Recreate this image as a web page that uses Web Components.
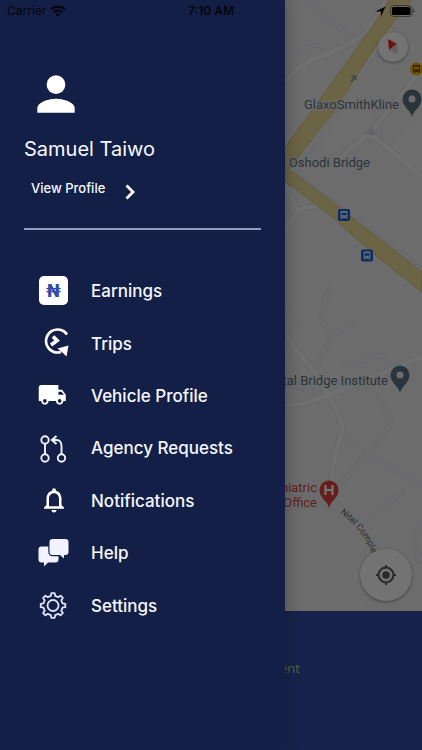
<!DOCTYPE html>
<html lang="en">
<head>
<meta charset="utf-8">
<meta name="viewport" content="width=device-width, initial-scale=1">
<title>Driver menu</title>
<style>
    html, body {
        margin: 0;
        height: 100%;
    }

    body {
        --drawer: #141f48;
        --panel: #324ca7;
        --label: #f6f8ff;
        font-family: Inter, "Liberation Sans", sans-serif;
        background: #17234d;
    }
</style>
</head>
<body>
<driver-app>
    <status-bar slot="status"></status-bar>
    <map-view slot="map"></map-view>
    <side-drawer slot="drawer" name="Samuel Taiwo">
        <menu-item icon="earnings" href="#earnings">Earnings</menu-item>
        <menu-item icon="trips" href="#trips">Trips</menu-item>
        <menu-item icon="vehicle" href="#vehicle">Vehicle Profile</menu-item>
        <menu-item icon="agency" href="#agency">Agency Requests</menu-item>
        <menu-item icon="bell" href="#notifications">Notifications</menu-item>
        <menu-item icon="help" href="#help">Help</menu-item>
        <menu-item icon="settings" href="#settings">Settings</menu-item>
    </side-drawer>
    <a slot="panel" href="#payment">ent</a>
</driver-app>

<script>
// Outline of a cog with rounded teeth
function gearPath(cx, cy, teeth, outer, inner) {
    const points = [];
    const step = (Math.PI * 2) / teeth;
    for (let i = 0; i < teeth; i++) {
        const mid = i * step - Math.PI / 2;
        [[-0.29, inner], [-0.17, outer], [0.17, outer], [0.29, inner]].forEach(([offset, r]) => {
            const angle = mid + offset * step;
            points.push((cx + Math.cos(angle) * r).toFixed(2) + ' ' + (cy + Math.sin(angle) * r).toFixed(2));
        });
    }
    return 'M' + points.join('L') + 'Z';
}

const ICONS = {
    earnings: `
        <rect x="2" y="1" width="29" height="29" rx="5" fill="#fff"/>
        <text x="16.5" y="22" text-anchor="middle" font-family="Roboto, sans-serif" font-size="18" font-weight="900" fill="#324ca7">₦</text>`,
    trips: `
        <path d="M30 6.5A11.5 11.5 0 1 0 24 24" fill="none" stroke="#fff" stroke-width="2.6"/>
        <path d="M20.5 20.5L31.5 17.5L29.5 28.5L26 25Z" fill="#fff"/>
        <path d="M16 8.5L20 12.5L14 17" fill="none" stroke="#fff" stroke-width="3.8"/>`,
    vehicle: `
        <g transform="translate(0.5 0) scale(1.23)"><path fill="#fff" d="M20 8h-3V4H3c-1.1 0-2 .9-2 2v11h2c0 1.66 1.34 3 3 3s3-1.34 3-3h6c0 1.66 1.34 3 3 3s3-1.34 3-3h2v-5l-3-4zM6 18.5c-.83 0-1.5-.67-1.5-1.5s.67-1.5 1.5-1.5 1.5.67 1.5 1.5-.67 1.5-1.5 1.5zm13.5-9l1.96 2.5H17V9.5h2.5zm-1.5 9c-.83 0-1.5-.67-1.5-1.5s.67-1.5 1.5-1.5 1.5.67 1.5 1.5-.67 1.5-1.5 1.5z"/></g>`,
    agency: `
        <g fill="none" stroke="#eef2ff" stroke-width="1.9">
            <circle cx="8" cy="8" r="3.7"/><circle cx="8" cy="26" r="3.7"/><circle cx="24.5" cy="26" r="3.7"/>
            <path d="M8 12v10M24.5 22v-8q0-6-5-6h-4"/>
            <path d="M19.5 4l-4.5 4l4.5 4" stroke-width="2.2"/>
        </g>`,
    bell: `
        <g transform="translate(2 0) scale(1.25)"><path fill="#fff" d="M12 22c1.1 0 2-.9 2-2h-4c0 1.1.89 2 2 2zm6-6v-5c0-3.07-1.63-5.64-4.5-6.32V4c0-.83-.67-1.5-1.5-1.5s-1.5.67-1.5 1.5v.68C7.64 5.36 6 7.92 6 11v5l-2 2v1h16v-1l-2-2zm-2 1H8v-6c0-2.48 1.51-4.5 4-4.5s4 2.02 4 4.5v6z"/></g>`,
    help: `
        <path fill="#f1f4ff" d="M4.5 9.5h14a3 3 0 0 1 3 3v10a3 3 0 0 1-3 3h-7.5L7 29.5V25.5H4.5a3 3 0 0 1-3-3v-10a3 3 0 0 1 3-3z"/>
        <path fill="#f1f4ff" stroke="#141f48" stroke-width="2.4" paint-order="stroke" d="M15.5 2h13a3 3 0 0 1 3 3v10a3 3 0 0 1-3 3h-1.5v3.5L23 18h-7.5a3 3 0 0 1-3-3V5a3 3 0 0 1 3-3z"/>`,
    settings: `
        <g fill="none" stroke="#dfe4f4" stroke-width="1.8" stroke-linejoin="round">
            <path d="${gearPath(16, 15.5, 8, 12.4, 9.8)}"/><circle cx="16" cy="15.5" r="5.5"/>
        </g>`
};

class DriverApp extends HTMLElement {
    constructor() {
        super();
        this.attachShadow({ mode: 'open' }).innerHTML = `
            <style>
                :host {
                    display: flex;
                    flex-direction: column;
                    position: relative;
                    min-height: 100vh;
                    overflow: hidden;
                }

                .map {
                    display: grid;
                    flex: 1;
                }

                .panel {
                    box-sizing: border-box;
                    height: 139px;
                    padding: 47px 122px 0 0;
                    background: var(--panel);
                    text-align: right;
                    font: 13px/20px "Noto Sans", sans-serif;
                }

                ::slotted(a) {
                    color: #a6dc6e;
                    text-decoration: none;
                }

                .scrim {
                    position: absolute;
                    inset: 0;
                    background: rgba(0, 0, 0, 0.54);
                }

                .drawer {
                    position: absolute;
                    inset: 0 auto 0 0;
                    display: grid;
                    width: 67.5%;
                }

                .status {
                    position: absolute;
                    inset: 0 0 auto 0;
                }
            </style>
            <div class="map"><slot name="map"></slot></div>
            <div class="panel"><slot name="panel"></slot></div>
            <div class="scrim"></div>
            <div class="drawer"><slot name="drawer"></slot></div>
            <div class="status"><slot name="status"></slot></div>
        `;
    }
}

class StatusBar extends HTMLElement {
    constructor() {
        super();
        this.attachShadow({ mode: 'open' }).innerHTML = `
            <style>
                :host {
                    display: grid;
                    grid-template-columns: 1fr auto 1fr;
                    align-items: center;
                    height: 22px;
                    padding: 0 7px;
                    color: #03050c;
                    font-size: 12px;
                    line-height: 20px;
                }

                .side {
                    display: flex;
                    align-items: center;
                    gap: 4px;
                }

                .end {
                    justify-content: flex-end;
                }

                .time {
                    font-weight: 600;
                }
            </style>
            <div class="side">
                <span>Carrier</span>
                <svg width="16" height="12" viewBox="0 0 16 12" fill="none" stroke="#03050c" stroke-width="2.2">
                    <path d="M1 4.5a10 10 0 0 1 14 0"/>
                    <path d="M3.6 7.3a6.3 6.3 0 0 1 8.8 0"/>
                    <path d="M8 11.7L5.7 9.4a3.3 3.3 0 0 1 4.6 0z" fill="#03050c" stroke="none"/>
                </svg>
            </div>
            <span class="time">7:10 AM</span>
            <div class="side end">
                <svg width="11" height="11" viewBox="0 0 11 11"><path d="M10.5 .5L6 10.5V5.5H.5z"/></svg>
                <svg width="25" height="12" viewBox="0 0 25 12">
                    <rect x=".5" y=".5" width="21.5" height="11" rx="3" fill="none" stroke="#3a3a3a"/>
                    <rect x="2" y="2" width="18.5" height="8" rx="1.5"/>
                    <path d="M23.2 4a2.2 2.2 0 0 1 0 4z" fill="#3a3a3a"/>
                </svg>
            </div>
        `;
    }
}

class MapView extends HTMLElement {
    constructor() {
        super();
        const roads = `
            M305 0L353 38 M285 58L308 47Q318 44 322 47L327 53
            M376 124L382 143
            M325 300L330 288 M328 290L321 320L332 334L353 325 M332 334L315 372
            M345 366L382 355L390 366 M378 395L391 420Q392 424 388 429L352 471L338 487
            M342 437L422 487 M285 303L296 318Q298 323 285 332 M285 350L296 370L290 378
            M285 383L325 395 M402 493L361 523 M422 519L413 534L418 557L422 560
            M408 566L422 558 M367 611L377 588 M285 508L330 503 M285 492L325 496
            M303 150Q305 144 313 146Q308 158 297 157`;
        const mainRoads = `
            M285 82L298 68Q310 60 330 53L353 42L370 29L390 -8
            M410 0L375 50L318 133L307 147L287 173 M420 72L375 127L365 137L340 158
            M365 137Q372 134 382 143L422 177
            M285 335L315 373L327 392L341 421Q343 425 342 430L333 466L332 490
            M285 405Q297 406 305 403L342 390L422 357 M285 232L298 210L318 205 M285 184L298 210`;
        const pin = (x, y, color, inner) => `
            <g transform="translate(${x} ${y})">
                <path fill="${color}" d="M0 18C-1.5 11 -9.5 8 -9.5 0A9.5 9.5 0 0 1 9.5 0C9.5 8 1.5 11 0 18Z"/>
                ${inner}
            </g>`;
        const hole = '<circle r="3.5" fill="#ededed"/>';
        const bus = (color) => `
            <path fill="${color}" fill-rule="evenodd" d="M-3.5 -3Q-3.5 -4 -2.5 -4H2.5Q3.5 -4 3.5 -3V3H3V4H1.8V3H-1.8V4H-3V3H-3.5ZM-2.5 -2.3V.3H2.5V-2.3ZM-2.4 1.2V2.2H-1.4V1.2ZM1.4 1.2V2.2H2.4V1.2Z"/>`;

        this.attachShadow({ mode: 'open' }).innerHTML = `
            <style>
                :host {
                    display: block;
                    position: relative;
                    overflow: hidden;
                    background: #ebebeb;
                }

                .canvas {
                    position: absolute;
                    width: 100%;
                    height: 100%;
                }

                text {
                    font: 13px Roboto, sans-serif;
                }

                .place {
                    fill: #5c7280;
                    stroke: #ebebeb;
                    stroke-width: 2px;
                    paint-order: stroke;
                }

                .hospital {
                    fill: #d5483f;
                }

                .road-name {
                    font-size: 9px;
                    fill: #5f5f5f;
                }

                button {
                    position: absolute;
                    display: grid;
                    place-items: center;
                    padding: 0;
                    border: 0;
                    border-radius: 50%;
                    background: #fafafa;
                    box-shadow: 0 1px 3px rgba(0, 0, 0, 0.4);
                }

                .compass {
                    top: 32px;
                    right: 14px;
                    width: 30px;
                    height: 30px;
                }

                .locate {
                    right: 10px;
                    bottom: 10px;
                    width: 52px;
                    height: 52px;
                }
            </style>
            <svg class="canvas" viewBox="0 0 422 611" preserveAspectRatio="xMaxYMax slice">
                <path d="M345 110L375 112L362 135L335 152L320 145Z M385 150L422 120V175Z" fill="#efefef"/>
                <g fill="none" stroke-linecap="round" stroke-linejoin="round">
                    <path d="${roads}" stroke="#e1e2e8" stroke-width="5"/>
                    <path d="${roads}" stroke="#ebebf0" stroke-width="3"/>
                    <path d="${mainRoads}" stroke="#e1e2e8" stroke-width="6"/>
                    <path d="${mainRoads}" stroke="#f5f5f7" stroke-width="4"/>
                    <path d="M302 177L422 267" stroke="#dcdde8" stroke-width="1"/>
                </g>
                <path d="M363 134L373 127L375 135Z" fill="#dcdde0"/>
                <g fill="#eadb96" stroke="#d8c682" stroke-width="1">
                    <path d="M285 169L296 174L422 272V292L375 255L332 217L295 188L285 182Z"/>
                    <path d="M390 -1H412L378 43L335 110L302 153L285 174V148L370 30Z"/>
                </g>
                <path d="M351 82L355 76M351 77L355 76L356 80" fill="none" stroke="#8c98ab" stroke-width="1.5"/>
                <g transform="translate(416.5 69)"><circle r="6.5" fill="#f4b400"/>${bus('#5d4b14')}</g>
                <g transform="translate(344 215)"><rect x="-6" y="-6" width="12" height="12" rx="2" fill="#1a62d6"/>${bus('#e8f0ff')}</g>
                <g transform="translate(367 255.5)"><rect x="-6" y="-6" width="12" height="12" rx="2" fill="#1a62d6"/>${bus('#e8f0ff')}</g>
                ${pin(412, 99, '#5c7280', hole)}
                ${pin(400, 375, '#5c7280', hole)}
                ${pin(329, 490, '#dc4338', '<path d="M-3.5 -5V5M3.5 -5V5M-3.5 0H3.5" stroke="#fff" stroke-width="2.2"/>')}
                <text class="place" x="399" y="109" text-anchor="end">GlaxoSmithKline</text>
                <text class="place" x="370" y="167" text-anchor="end">Oshodi Bridge</text>
                <text class="place" x="388" y="385" text-anchor="end">tal Bridge Institute</text>
                <text class="hospital" x="317" y="492" text-anchor="end">hiatric</text>
                <text class="hospital" x="317" y="507" text-anchor="end">Office</text>
                <path id="nitel" d="M340 513Q362 530 370 549L376 570" fill="none"/>
                <text class="road-name"><textPath href="#nitel">Nitel Comple</textPath></text>
            </svg>
            <button class="compass" aria-label="Reset north">
                <svg width="30" height="30" viewBox="0 0 30 30">
                    <path d="M10 7L19 12L11 18Z" fill="#f0252b"/>
                    <path d="M19 12L20 23L11 18Z" fill="#d6d6d6"/>
                </svg>
            </button>
            <button class="locate" aria-label="My location">
                <svg width="22" height="22" viewBox="0 0 22 22" fill="none" stroke="#5a5a5a" stroke-width="2">
                    <circle cx="11" cy="11" r="7.5"/>
                    <path d="M11 1v3M11 18v3M1 11h3M18 11h3"/>
                    <circle cx="11" cy="11" r="3.8" fill="#5a5a5a" stroke="none"/>
                </svg>
            </button>
        `;
    }
}

class SideDrawer extends HTMLElement {
    constructor() {
        super();
        this.attachShadow({ mode: 'open' });
    }

    connectedCallback() {
        this.shadowRoot.innerHTML = `
            <style>
                :host {
                    display: block;
                    padding: 66px 24px 24px;
                    background: var(--drawer);
                    box-shadow: 0 0 16px rgba(0, 0, 0, 0.3);
                    color: var(--label);
                }

                .avatar {
                    display: block;
                    margin-left: 4px;
                }

                h1 {
                    margin: 13px 0 0;
                    font-size: 20px;
                    font-weight: 400;
                    line-height: 28px;
                }

                .profile {
                    display: flex;
                    gap: 20px;
                    margin: 13px 7px 0;
                    color: inherit;
                    font-size: 13px;
                    font-weight: 500;
                    line-height: 24px;
                    text-decoration: none;
                }

                .profile svg {
                    margin-top: 8px;
                }

                hr {
                    height: 2px;
                    margin: 28px 0 0;
                    border: 0;
                    background: #919dbc;
                }

                nav {
                    display: grid;
                    grid-auto-rows: 1fr;
                    height: 367px;
                    margin-top: 35px;
                    padding-left: 13px;
                }
            </style>
            <svg class="avatar" width="56" height="56" viewBox="0 0 24 24" fill="#fff">
                <circle cx="12" cy="8" r="4"/>
                <path d="M12 14c-2.67 0-8 1.34-8 4v2h16v-2c0-2.66-5.33-4-8-4z"/>
            </svg>
            <h1>${this.getAttribute('name') || ''}</h1>
            <a class="profile" href="#profile">
                <span>View Profile</span>
                <svg width="10" height="16" viewBox="0 0 10 16" fill="none" stroke="#fff" stroke-width="2.8"><path d="M1.5 1.5L8 8L1.5 14.5"/></svg>
            </a>
            <hr>
            <nav><slot></slot></nav>
        `;
    }
}

class MenuItem extends HTMLElement {
    constructor() {
        super();
        this.attachShadow({ mode: 'open' });
    }

    connectedCallback() {
        this.shadowRoot.innerHTML = `
            <style>
                :host {
                    display: grid;
                }

                a {
                    display: flex;
                    align-items: center;
                    gap: 22px;
                    color: inherit;
                    font-size: 17px;
                    font-weight: 500;
                    line-height: 24px;
                    text-decoration: none;
                }
            </style>
            <a href="${this.getAttribute('href')}">
                <svg width="32" height="32" viewBox="0 0 32 32">${ICONS[this.getAttribute('icon')] || ''}</svg>
                <span><slot></slot></span>
            </a>
        `;
    }
}

customElements.define('driver-app', DriverApp);
customElements.define('status-bar', StatusBar);
customElements.define('map-view', MapView);
customElements.define('side-drawer', SideDrawer);
customElements.define('menu-item', MenuItem);
</script>
</body>
</html>
